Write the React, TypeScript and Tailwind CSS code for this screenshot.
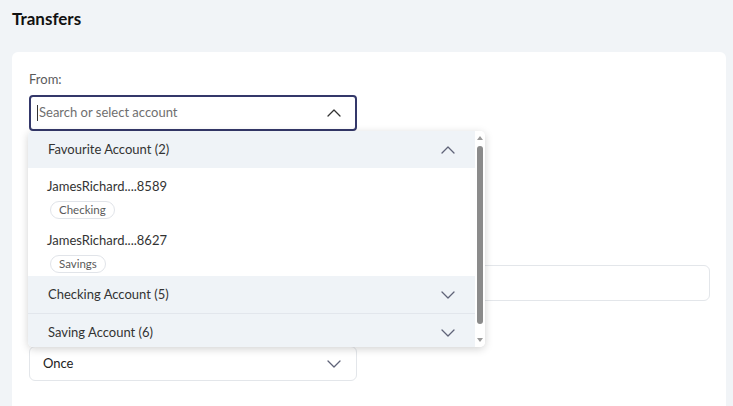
import React from 'react';

const font = { fontFamily: 'Lato, "Noto Sans", sans-serif' };

const Chevron = ({ up = false, className = '' }: { up?: boolean; className?: string }) => (
  <svg width="14" height="8" viewBox="0 0 14 8" className={className} fill="none">
    <polyline
      points={up ? '1,7 7,1 13,7' : '1,1 7,7 13,1'}
      stroke="currentColor"
      strokeWidth="1.3"
      strokeLinecap="round"
      strokeLinejoin="round"
    />
  </svg>
);

const GroupRow = ({ label, open = false }: { label: string; open?: boolean }) => (
  <div className="flex h-[37px] items-center justify-between bg-[#eff3f7] pl-5 pr-[20px] text-[13px] text-[#333]">
    <span>{label}</span>
    <Chevron up={open} className="text-[#5f6378]" />
  </div>
);

const AccountItem = ({ name, type }: { name: string; type: string }) => (
  <div className="h-[54px] pl-[19px] pt-[8px] pb-[6px]">
    <div className="text-[13px] leading-[20px] text-[#333]">{name}</div>
    <span className="mt-[2px] ml-[3px] inline-flex h-[18px] items-center rounded-full border border-[#e1e4e9] px-[8px] text-[11.5px] text-[#5a5a5a]">
      {type}
    </span>
  </div>
);

// label slot for fields whose label sits under the open menu
const LabelGap = () => <div className="mb-[6px] h-[19px]" />;

export default function App() {
  return (
    <div style={font} className="h-screen w-full overflow-hidden bg-[#f1f4f7] text-[#222]">
      <h1 className="px-3 pt-[9px] text-[17px] font-bold leading-[20px] text-[#111]">Transfers</h1>

      <div className="relative ml-3 mr-[7px] mt-[23px] rounded-md bg-white pl-[17px] pr-4 pt-[18px] pb-8">
        <div className="flex flex-col">
          {/* From */}
          <div>
            <label className="mb-[6px] block text-[13px] leading-[19px] text-[#5b5b5b]">From:</label>
            <div className="flex h-[36px] w-[328px] items-center justify-between rounded-[4px] border-2 border-[#34386a] pl-[6px] pr-[14px]">
              <span className="flex items-center text-[13px] text-[#6f6f6f]">
                <span className="mr-[1px] inline-block h-[16px] w-px bg-[#333]" />
                Search or select account
              </span>
              <Chevron up className="text-[#333]" />
            </div>
          </div>

          {/* To (behind the menu) */}
          <div className="mt-5">
            <LabelGap />
            <div className="h-[44px] w-[328px] rounded-[4px] border border-[#e3e6ea]" />
          </div>

          {/* Amount */}
          <div className="mt-5">
            <LabelGap />
            <div className="h-[36px] w-full rounded-[6px] border border-[#e3e6ea]" />
          </div>

          {/* Frequency */}
          <div className="mt-5">
            <LabelGap />
            <div className="flex h-[35px] w-[328px] items-center justify-between rounded-[6px] border border-[#e3e6ea] pl-[13px] pr-[15px]">
              <span className="text-[13px] text-[#222]">Once</span>
              <Chevron className="text-[#5f6378]" />
            </div>
          </div>
        </div>

        {/* open menu */}
        <div className="absolute left-4 top-[79px] flex h-[216px] w-[457px] overflow-hidden rounded-[5px] bg-white shadow-[0_2px_8px_rgba(0,0,0,0.18)]">
          <div className="flex-1">
            <GroupRow label="Favourite Account (2)" open />
            <AccountItem name="JamesRichard....8589" type="Checking" />
            <AccountItem name="JamesRichard....8627" type="Savings" />
            <GroupRow label="Checking Account (5)" />
            <div className="h-px bg-[#e2e6ec]" />
            <GroupRow label="Saving Account (6)" />
          </div>
          <div className="relative w-[10px] bg-white">
            <div className="absolute left-[2px] top-[5px] h-0 w-0 border-x-[3px] border-b-[4px] border-x-transparent border-b-[#9a9a9a]" />
            <div className="absolute left-[2px] top-[15px] h-[178px] w-[6px] rounded-full bg-[#8b8b8b]" />
            <div className="absolute bottom-[5px] left-[2px] h-0 w-0 border-x-[3px] border-t-[4px] border-x-transparent border-t-[#9a9a9a]" />
          </div>
        </div>
      </div>
    </div>
  );
}
